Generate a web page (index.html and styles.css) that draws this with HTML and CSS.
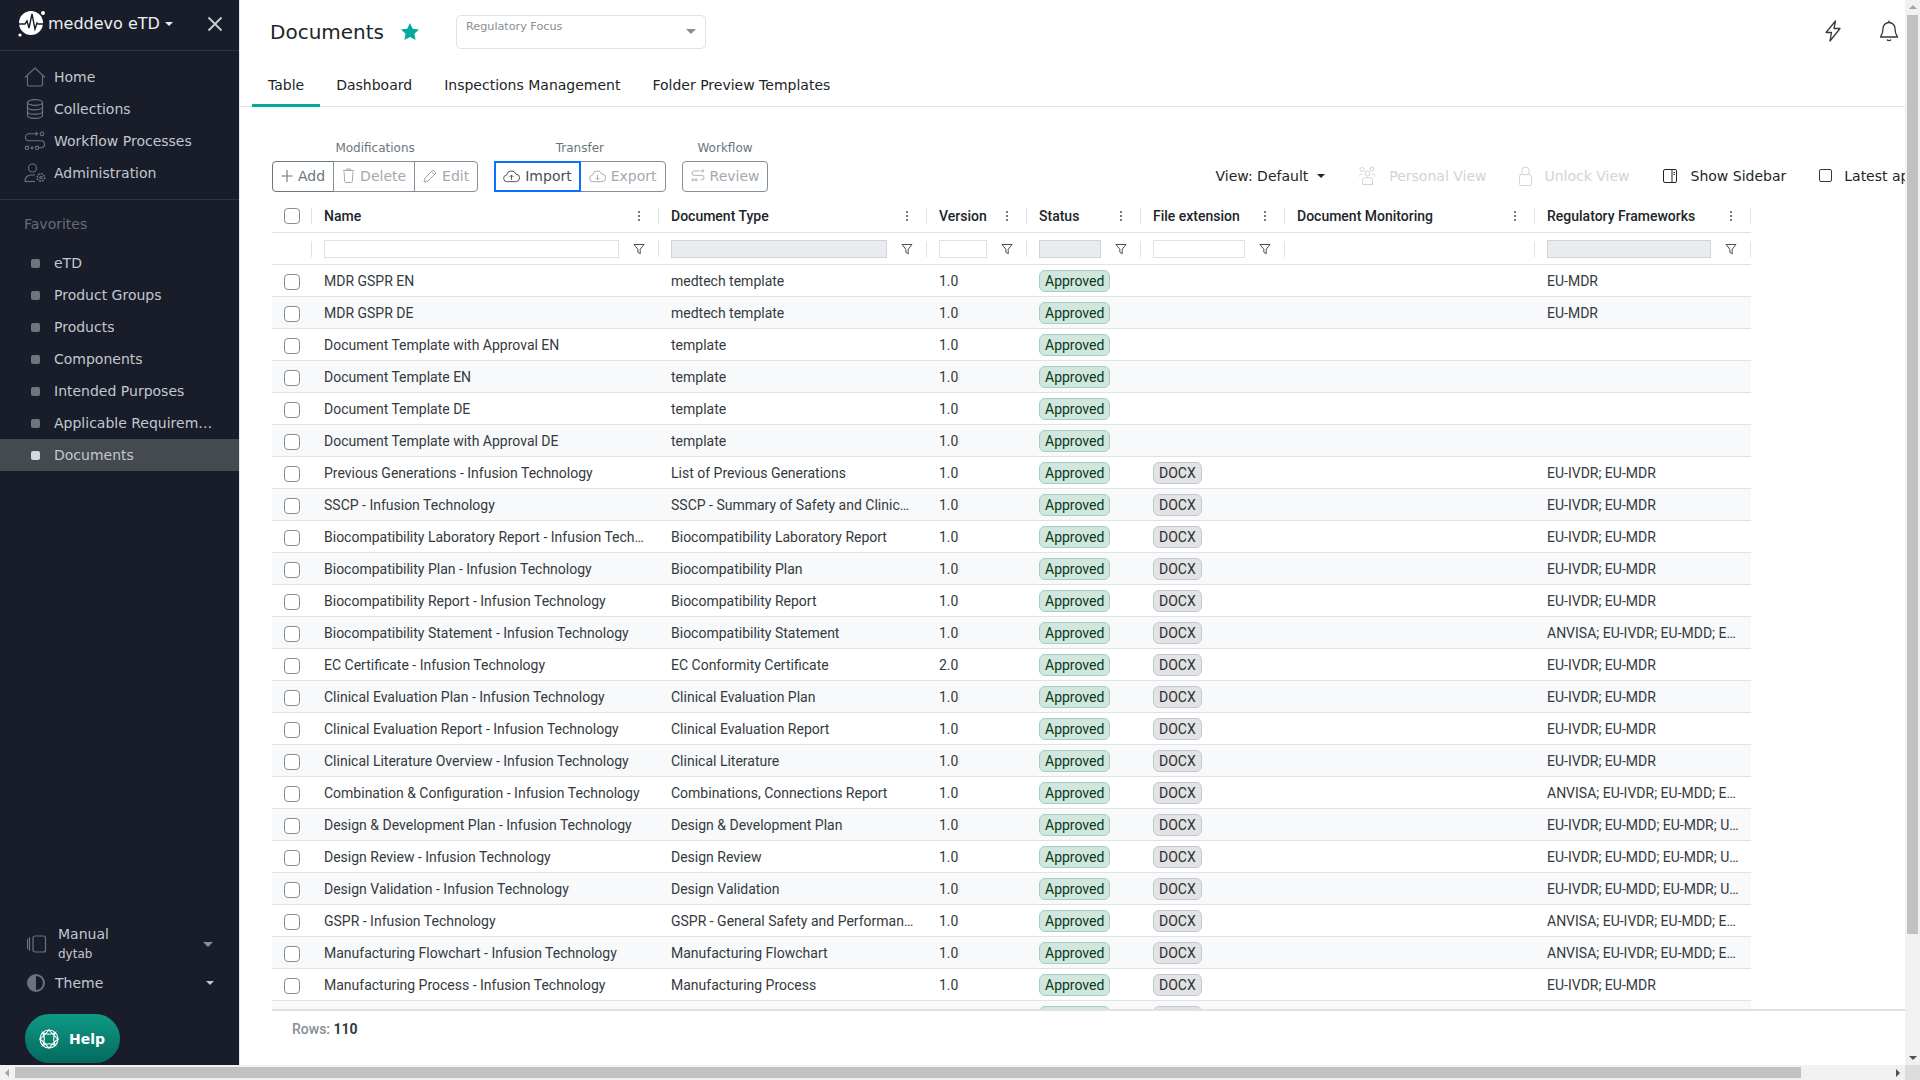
FILE: index.html
```html
<!DOCTYPE html>
<html lang="en">

<head>
    <meta charset="UTF-8">
    <title>Documents</title>
    <link rel="stylesheet" href="styles.css">
</head>

<body>
    <svg class="defs" width="0" height="0">
        <symbol id="kebab" viewBox="0 0 4 12">
            <circle cx="2" cy="2" r="1" />
            <circle cx="2" cy="6" r="1" />
            <circle cx="2" cy="10" r="1" />
        </symbol>
        <symbol id="funnel" viewBox="0 0 12 12">
            <path d="M1 1.5h10L7.2 6.2v4.6L4.8 9.2v-3z" fill="none" stroke="currentColor" stroke-width="1" stroke-linejoin="round" />
        </symbol>
    </svg>

    <div class="app">
        <aside class="sidebar">
            <div class="brand">
                <svg class="logo" width="32" height="32" viewBox="0 0 32 32">
                    <circle cx="15" cy="15" r="12" fill="#fff" />
                    <circle cx="27" cy="5" r="2" fill="#fff" />
                    <circle cx="4" cy="27" r="1.6" fill="#fff" />
                    <path d="M3 16h6l2-3 2 7 3-14 3 15 2-6 1 1h5" fill="none" stroke="#181d29" stroke-width="1.4" />
                </svg>
                <span class="brand-name">meddevo eTD</span>
                <span class="caret caret-white"></span>
                <svg class="close" width="16" height="16" viewBox="0 0 16 16">
                    <path d="M1.5 1.5l13 13M14.5 1.5l-13 13" stroke="#c9ced6" stroke-width="1.8" />
                </svg>
            </div>

            <nav class="nav">
                <a class="nav-item">
                    <svg width="22" height="20" viewBox="0 0 22 20" fill="none" stroke="#6b7280" stroke-width="1.1">
                        <path d="M1 10.5L11 1l10 9.5" />
                        <path d="M3.5 8.5v9a1.5 1.5 0 0 0 1.5 1.5h12a1.5 1.5 0 0 0 1.5-1.5v-9" />
                    </svg>
                    Home
                </a>
                <a class="nav-item">
                    <svg width="22" height="20" viewBox="0 0 22 20" fill="none" stroke="#6b7280" stroke-width="1.2">
                        <ellipse cx="11" cy="3.5" rx="7.5" ry="2.8" />
                        <path d="M3.5 3.5v13c0 1.6 3.4 2.8 7.5 2.8s7.5-1.2 7.5-2.8v-13" />
                        <path d="M3.5 8c0 1.6 3.4 2.8 7.5 2.8s7.5-1.2 7.5-2.8M3.5 12.4c0 1.6 3.4 2.8 7.5 2.8s7.5-1.2 7.5-2.8" />
                    </svg>
                    Collections
                </a>
                <a class="nav-item">
                    <svg width="22" height="20" viewBox="0 0 22 20" fill="none" stroke="#6b7280" stroke-width="1.1">
                        <circle cx="18" cy="2.8" r="1.8" />
                        <path d="M14 2.8H5a3 3 0 0 0 0 7h12a3 3 0 0 1 0 7h-2" />
                        <path d="M11.5 1l2 1.8-2 1.8" />
                        <circle cx="3" cy="16.8" r="1.7" />
                        <circle cx="8" cy="16.8" r="1" />
                        <circle cx="13" cy="16.8" r="1.7" />
                    </svg>
                    Workflow Processes
                </a>
                <a class="nav-item">
                    <svg width="22" height="20" viewBox="0 0 22 20" fill="none" stroke="#6b7280" stroke-width="1.1">
                        <circle cx="8.5" cy="5" r="4" />
                        <path d="M1 18.5c0-4 2.500-6.500 6-6.500h4" />
                        <path d="M1 18.500h10" />
                        <circle cx="17" cy="14.500" r="3.700" stroke-dasharray="2 .8" stroke-width="1.400" />
                        <circle cx="17" cy="14.500" r="1.200" />
                    </svg>
                    Administration
                </a>
            </nav>

            <div class="favorites">
                <div class="fav-title">Favorites</div>
                <a class="nav-item fav"><i class="bullet"></i><span class="fav-name">eTD</span></a>
                <a class="nav-item fav"><i class="bullet"></i><span class="fav-name">Product Groups</span></a>
                <a class="nav-item fav"><i class="bullet"></i><span class="fav-name">Products</span></a>
                <a class="nav-item fav"><i class="bullet"></i><span class="fav-name">Components</span></a>
                <a class="nav-item fav"><i class="bullet"></i><span class="fav-name">Intended Purposes</span></a>
                <a class="nav-item fav"><i class="bullet"></i><span class="fav-name">Applicable Requirements</span></a>
                <a class="nav-item fav active"><i class="bullet"></i><span class="fav-name">Documents</span></a>
            </div>

            <div class="side-bottom">
                <div class="manual">
                    <svg width="20" height="18" viewBox="0 0 20 18" fill="none" stroke="#6b7280" stroke-width="1.2">
                        <rect x="6" y="1" width="12.500" height="16" rx="2" />
                        <path d="M2.500 2v14M.6 4v10" />
                    </svg>
                    <div class="manual-text">
                        <div>Manual</div>
                        <div class="manual-sub">dytab</div>
                    </div>
                    <span class="caret caret-gray"></span>
                </div>
                <div class="theme">
                    <svg width="18" height="18" viewBox="0 0 18 18">
                        <circle cx="9" cy="9" r="8" fill="none" stroke="#6b7280" stroke-width="2" />
                        <path d="M9 1a8 8 0 0 0 0 16z" fill="#6b7280" />
                    </svg>
                    <span class="theme-label">Theme</span>
                    <span class="caret caret-light"></span>
                </div>
                <button class="help">
                    <svg width="20" height="20" viewBox="0 0 20 20" fill="none" stroke="#fff" stroke-width="1.100">
                        <circle cx="10" cy="10" r="9" />
                        <path d="M10 1Q14 6 19 10 14 14 10 19 6 14 1 10 6 6 10 1z" />
                        <path d="M3.600 3.600Q10 7 16.400 3.600 13 10 16.400 16.400 10 13 3.600 16.400 7 10 3.600 3.600z" />
                    </svg>
                    Help
                </button>
            </div>
        </aside>

        <main class="main">
            <header class="topbar">
                <h1>Documents</h1>
                <svg class="star" width="18" height="17" viewBox="0 0 18 17">
                    <path d="M9 0l2.700 5.700 6.300.8-4.600 4.300 1.200 6.200L9 14l-5.600 3 1.200-6.200L0 6.500l6.300-.8z" fill="#00ab9e" />
                </svg>
                <div class="focus">
                    <span>Regulatory Focus</span>
                    <span class="caret caret-gray"></span>
                </div>
                <div class="top-icons">
                    <svg width="18" height="22" viewBox="0 0 18 22" fill="none" stroke="#343a40" stroke-width="1.300" stroke-linejoin="round">
                        <path d="M11.500 1L2 12.500h5.500L6 21l10-12.500h-6z" />
                    </svg>
                    <svg width="20" height="22" viewBox="0 0 20 22" fill="none" stroke="#343a40" stroke-width="1.300" stroke-linejoin="round">
                        <path d="M10 2.500a6 6 0 0 0-6 6c0 5-1 6.500-2.500 8.500h17C17 15 16 13.500 16 8.500a6 6 0 0 0-6-6z" />
                        <path d="M10 .6v1.900M8 19.500a2.200 2 0 0 0 4 0" />
                    </svg>
                </div>
            </header>

            <div class="tabs">
                <a class="tab selected">Table</a>
                <a class="tab">Dashboard</a>
                <a class="tab">Inspections Management</a>
                <a class="tab">Folder Preview Templates</a>
            </div>

            <div class="toolbar">
                <div class="group">
                    <div class="group-label">Modifications</div>
                    <div class="btn-group">
                        <button class="btn strong">
                            <svg width="12" height="14" viewBox="0 0 12 14" stroke="currentColor" stroke-width="1.100"><path d="M6 1v12M.5 7h11" /></svg>
                            Add
                        </button>
                        <button class="btn">
                            <svg width="13" height="15" viewBox="0 0 12 15" fill="none" stroke="currentColor"><path d="M1.500 3.500l.7 10a1 1 0 0 0 1 1h5.600a1 1 0 0 0 1-1l.7-10M.5 2.500h11M4 2.500V1h4v1.500" /></svg>
                            Delete
                        </button>
                        <button class="btn">
                            <svg width="14" height="14" viewBox="0 0 14 14" fill="none" stroke="currentColor"><path d="M1 13l1-4L10 1l3 3-8 8zM8.500 2.500l3 3" /></svg>
                            Edit
                        </button>
                    </div>
                </div>
                <div class="group">
                    <div class="group-label">Transfer</div>
                    <div class="btn-group">
                        <button class="btn strong focused">
                            <svg width="17" height="14" viewBox="0 0 18 14" fill="none" stroke="currentColor"><path d="M4.500 13a3.500 3.500 0 0 1-.6-7 5 5 0 0 1 9.700-1 4 4 0 0 1 0 8zM9 11V6M7 8l2-2 2 2" /></svg>
                            Import
                        </button>
                        <button class="btn">
                            <svg width="17" height="14" viewBox="0 0 18 14" fill="none" stroke="currentColor"><path d="M4.500 13a3.500 3.500 0 0 1-.6-7 5 5 0 0 1 9.700-1 4 4 0 0 1 0 8zM9 6v5M7 9l2 2 2-2" /></svg>
                            Export
                        </button>
                    </div>
                </div>
                <div class="group">
                    <div class="group-label">Workflow</div>
                    <div class="btn-group">
                        <button class="btn">
                            <svg width="14" height="15" viewBox="0 0 22 20" fill="none" stroke="currentColor" stroke-width="1.400"><circle cx="18" cy="2.800" r="1.800" /><path d="M14 2.800H5a3 3 0 0 0 0 7h12a3 3 0 0 1 0 7h-2" /><circle cx="3" cy="16.800" r="1.700" /><circle cx="8" cy="16.800" r="1.700" /></svg>
                            Review
                        </button>
                    </div>
                </div>

                <div class="view-tools">
                    <div class="tool">View: Default <span class="caret caret-dark"></span></div>
                    <div class="tool muted">
                        <svg width="19" height="20" viewBox="0 0 18 20" fill="none" stroke="currentColor"><circle cx="9" cy="7.500" r="2.500" /><circle cx="3.500" cy="3.500" r="2" /><circle cx="13.500" cy="3" r="2" /><path d="M4 18.500v-4a3 3 0 0 1 3-3h4a3 3 0 0 1 3 3v4zM1 10.500c0-1.500 1-2.500 3-2.500M16.500 10.500c0-1.500-1-2.500-3-2.500" /></svg>
                        Personal View
                    </div>
                    <div class="tool muted">
                        <svg width="13" height="20" viewBox="0 0 13 20" fill="none" stroke="currentColor"><rect x=".5" y="8.500" width="12" height="11" rx="2" /><path d="M3 8.500V4.500a3.500 3.500 0 0 1 7 0v4" /></svg>
                        Unlock View
                    </div>
                    <div class="tool">
                        <svg class="side-icon" width="14" height="14" viewBox="0 0 14 14" fill="none" stroke="#212529"><rect x=".5" y=".5" width="13" height="13" rx="1.500" /><path d="M9 .5v13M10.500 3.500h1.500M10.500 5.500h1.500" /></svg>
                        Show Sidebar
                    </div>
                    <div class="tool">
                        <i class="check small"></i>
                        Latest approved
                    </div>
                </div>
            </div>

            <div class="grid">
                <div class="row head">
                    <div class="cell box"><div class="inner"><i class="check"></i></div></div>
                    <div class="cell"><div class="inner">Name<svg class="kebab"><use href="#kebab" /></svg></div></div>
                    <div class="cell"><div class="inner">Document Type<svg class="kebab"><use href="#kebab" /></svg></div></div>
                    <div class="cell"><div class="inner">Version<svg class="kebab"><use href="#kebab" /></svg></div></div>
                    <div class="cell"><div class="inner">Status<svg class="kebab"><use href="#kebab" /></svg></div></div>
                    <div class="cell"><div class="inner">File extension<svg class="kebab"><use href="#kebab" /></svg></div></div>
                    <div class="cell"><div class="inner">Document Monitoring<svg class="kebab"><use href="#kebab" /></svg></div></div>
                    <div class="cell"><div class="inner">Regulatory Frameworks<svg class="kebab"><use href="#kebab" /></svg></div></div>
                </div>
                <div class="row filters">
                    <div class="cell box"><div class="inner"></div></div>
                    <div class="cell"><div class="inner"><input class="filter"><svg class="funnel"><use href="#funnel" /></svg></div></div>
                    <div class="cell"><div class="inner"><input class="filter off"><svg class="funnel"><use href="#funnel" /></svg></div></div>
                    <div class="cell"><div class="inner"><input class="filter"><svg class="funnel"><use href="#funnel" /></svg></div></div>
                    <div class="cell"><div class="inner"><input class="filter off"><svg class="funnel"><use href="#funnel" /></svg></div></div>
                    <div class="cell"><div class="inner"><input class="filter"><svg class="funnel"><use href="#funnel" /></svg></div></div>
                    <div class="cell"><div class="inner"></div></div>
                    <div class="cell"><div class="inner"><input class="filter off"><svg class="funnel"><use href="#funnel" /></svg></div></div>
                </div>
                <div class="rows">
                    <div class="row"><div class="cell box"><i class="check"></i></div><div class="cell">MDR GSPR EN</div><div class="cell">medtech template</div><div class="cell">1.0</div><div class="cell"><span class="badge ok">Approved</span></div><div class="cell"></div><div class="cell"></div><div class="cell">EU-MDR</div></div>
                    <div class="row"><div class="cell box"><i class="check"></i></div><div class="cell">MDR GSPR DE</div><div class="cell">medtech template</div><div class="cell">1.0</div><div class="cell"><span class="badge ok">Approved</span></div><div class="cell"></div><div class="cell"></div><div class="cell">EU-MDR</div></div>
                    <div class="row"><div class="cell box"><i class="check"></i></div><div class="cell">Document Template with Approval EN</div><div class="cell">template</div><div class="cell">1.0</div><div class="cell"><span class="badge ok">Approved</span></div><div class="cell"></div><div class="cell"></div><div class="cell"></div></div>
                    <div class="row"><div class="cell box"><i class="check"></i></div><div class="cell">Document Template EN</div><div class="cell">template</div><div class="cell">1.0</div><div class="cell"><span class="badge ok">Approved</span></div><div class="cell"></div><div class="cell"></div><div class="cell"></div></div>
                    <div class="row"><div class="cell box"><i class="check"></i></div><div class="cell">Document Template DE</div><div class="cell">template</div><div class="cell">1.0</div><div class="cell"><span class="badge ok">Approved</span></div><div class="cell"></div><div class="cell"></div><div class="cell"></div></div>
                    <div class="row"><div class="cell box"><i class="check"></i></div><div class="cell">Document Template with Approval DE</div><div class="cell">template</div><div class="cell">1.0</div><div class="cell"><span class="badge ok">Approved</span></div><div class="cell"></div><div class="cell"></div><div class="cell"></div></div>
                    <div class="row"><div class="cell box"><i class="check"></i></div><div class="cell">Previous Generations - Infusion Technology</div><div class="cell">List of Previous Generations</div><div class="cell">1.0</div><div class="cell"><span class="badge ok">Approved</span></div><div class="cell"><span class="badge ext">DOCX</span></div><div class="cell"></div><div class="cell">EU-IVDR; EU-MDR</div></div>
                    <div class="row"><div class="cell box"><i class="check"></i></div><div class="cell">SSCP - Infusion Technology</div><div class="cell">SSCP - Summary of Safety and Clinical Performance</div><div class="cell">1.0</div><div class="cell"><span class="badge ok">Approved</span></div><div class="cell"><span class="badge ext">DOCX</span></div><div class="cell"></div><div class="cell">EU-IVDR; EU-MDR</div></div>
                    <div class="row"><div class="cell box"><i class="check"></i></div><div class="cell">Biocompatibility Laboratory Report - Infusion Technology</div><div class="cell">Biocompatibility Laboratory Report</div><div class="cell">1.0</div><div class="cell"><span class="badge ok">Approved</span></div><div class="cell"><span class="badge ext">DOCX</span></div><div class="cell"></div><div class="cell">EU-IVDR; EU-MDR</div></div>
                    <div class="row"><div class="cell box"><i class="check"></i></div><div class="cell">Biocompatibility Plan - Infusion Technology</div><div class="cell">Biocompatibility Plan</div><div class="cell">1.0</div><div class="cell"><span class="badge ok">Approved</span></div><div class="cell"><span class="badge ext">DOCX</span></div><div class="cell"></div><div class="cell">EU-IVDR; EU-MDR</div></div>
                    <div class="row"><div class="cell box"><i class="check"></i></div><div class="cell">Biocompatibility Report - Infusion Technology</div><div class="cell">Biocompatibility Report</div><div class="cell">1.0</div><div class="cell"><span class="badge ok">Approved</span></div><div class="cell"><span class="badge ext">DOCX</span></div><div class="cell"></div><div class="cell">EU-IVDR; EU-MDR</div></div>
                    <div class="row"><div class="cell box"><i class="check"></i></div><div class="cell">Biocompatibility Statement - Infusion Technology</div><div class="cell">Biocompatibility Statement</div><div class="cell">1.0</div><div class="cell"><span class="badge ok">Approved</span></div><div class="cell"><span class="badge ext">DOCX</span></div><div class="cell"></div><div class="cell">ANVISA; EU-IVDR; EU-MDD; EU-MDR</div></div>
                    <div class="row"><div class="cell box"><i class="check"></i></div><div class="cell">EC Certificate - Infusion Technology</div><div class="cell">EC Conformity Certificate</div><div class="cell">2.0</div><div class="cell"><span class="badge ok">Approved</span></div><div class="cell"><span class="badge ext">DOCX</span></div><div class="cell"></div><div class="cell">EU-IVDR; EU-MDR</div></div>
                    <div class="row"><div class="cell box"><i class="check"></i></div><div class="cell">Clinical Evaluation Plan - Infusion Technology</div><div class="cell">Clinical Evaluation Plan</div><div class="cell">1.0</div><div class="cell"><span class="badge ok">Approved</span></div><div class="cell"><span class="badge ext">DOCX</span></div><div class="cell"></div><div class="cell">EU-IVDR; EU-MDR</div></div>
                    <div class="row"><div class="cell box"><i class="check"></i></div><div class="cell">Clinical Evaluation Report - Infusion Technology</div><div class="cell">Clinical Evaluation Report</div><div class="cell">1.0</div><div class="cell"><span class="badge ok">Approved</span></div><div class="cell"><span class="badge ext">DOCX</span></div><div class="cell"></div><div class="cell">EU-IVDR; EU-MDR</div></div>
                    <div class="row"><div class="cell box"><i class="check"></i></div><div class="cell">Clinical Literature Overview - Infusion Technology</div><div class="cell">Clinical Literature</div><div class="cell">1.0</div><div class="cell"><span class="badge ok">Approved</span></div><div class="cell"><span class="badge ext">DOCX</span></div><div class="cell"></div><div class="cell">EU-IVDR; EU-MDR</div></div>
                    <div class="row"><div class="cell box"><i class="check"></i></div><div class="cell">Combination &amp; Configuration - Infusion Technology</div><div class="cell">Combinations, Connections Report</div><div class="cell">1.0</div><div class="cell"><span class="badge ok">Approved</span></div><div class="cell"><span class="badge ext">DOCX</span></div><div class="cell"></div><div class="cell">ANVISA; EU-IVDR; EU-MDD; EU-MDR</div></div>
                    <div class="row"><div class="cell box"><i class="check"></i></div><div class="cell">Design &amp; Development Plan - Infusion Technology</div><div class="cell">Design &amp; Development Plan</div><div class="cell">1.0</div><div class="cell"><span class="badge ok">Approved</span></div><div class="cell"><span class="badge ext">DOCX</span></div><div class="cell"></div><div class="cell">EU-IVDR; EU-MDD; EU-MDR; UKCA</div></div>
                    <div class="row"><div class="cell box"><i class="check"></i></div><div class="cell">Design Review - Infusion Technology</div><div class="cell">Design Review</div><div class="cell">1.0</div><div class="cell"><span class="badge ok">Approved</span></div><div class="cell"><span class="badge ext">DOCX</span></div><div class="cell"></div><div class="cell">EU-IVDR; EU-MDD; EU-MDR; UKCA</div></div>
                    <div class="row"><div class="cell box"><i class="check"></i></div><div class="cell">Design Validation - Infusion Technology</div><div class="cell">Design Validation</div><div class="cell">1.0</div><div class="cell"><span class="badge ok">Approved</span></div><div class="cell"><span class="badge ext">DOCX</span></div><div class="cell"></div><div class="cell">EU-IVDR; EU-MDD; EU-MDR; UKCA</div></div>
                    <div class="row"><div class="cell box"><i class="check"></i></div><div class="cell">GSPR - Infusion Technology</div><div class="cell">GSPR - General Safety and Performance Requirements</div><div class="cell">1.0</div><div class="cell"><span class="badge ok">Approved</span></div><div class="cell"><span class="badge ext">DOCX</span></div><div class="cell"></div><div class="cell">ANVISA; EU-IVDR; EU-MDD; EU-MDR</div></div>
                    <div class="row"><div class="cell box"><i class="check"></i></div><div class="cell">Manufacturing Flowchart - Infusion Technology</div><div class="cell">Manufacturing Flowchart</div><div class="cell">1.0</div><div class="cell"><span class="badge ok">Approved</span></div><div class="cell"><span class="badge ext">DOCX</span></div><div class="cell"></div><div class="cell">ANVISA; EU-IVDR; EU-MDD; EU-MDR</div></div>
                    <div class="row"><div class="cell box"><i class="check"></i></div><div class="cell">Manufacturing Process - Infusion Technology</div><div class="cell">Manufacturing Process</div><div class="cell">1.0</div><div class="cell"><span class="badge ok">Approved</span></div><div class="cell"><span class="badge ext">DOCX</span></div><div class="cell"></div><div class="cell">EU-IVDR; EU-MDR</div></div>
                    <div class="row"><div class="cell box"></div><div class="cell"></div><div class="cell"></div><div class="cell"></div><div class="cell"><span class="badge ok">Approved</span></div><div class="cell"><span class="badge ext">DOCX</span></div><div class="cell"></div><div class="cell"></div></div>
                </div>
                <div class="grid-foot"><span class="rows-label">Rows:</span> <b>110</b></div>
            </div>
        </main>
    </div>

    <div class="vscroll">
        <span class="arrow up"></span>
        <div class="vthumb"></div>
        <span class="arrow down"></span>
    </div>
    <div class="hscroll">
        <span class="arrow left"></span>
        <div class="hthumb"></div>
        <span class="arrow right"></span>
    </div>
    <div class="corner"></div>
</body>

</html>
```

FILE: styles.css
```css
* {
    box-sizing: border-box;
}

body {
    margin: 0;
    height: 100vh;
    overflow: hidden;
    display: grid;
    grid-template-columns: 1fr 15px;
    grid-template-rows: 1fr 15px;
    font-family: "DejaVu Sans", sans-serif;
    font-size: 14px;
    color: #212529;
    background-color: white;
}

.defs {
    position: absolute;
}

.app {
    display: flex;
    min-width: 0;
    min-height: 0;
    overflow: hidden;
}

/* sidebar */
.sidebar {
    width: 240px;
    flex-shrink: 0;
    display: flex;
    flex-direction: column;
    background-color: #181d29;
    border-right: 1px solid #e4e7ec;
    color: #c3c7ce;
}

.brand {
    height: 51px;
    display: flex;
    align-items: center;
    padding: 0 16px 3px 16px;
    border-bottom: 1px solid #2f3440;
    flex-shrink: 0;
}

.logo {
    flex-shrink: 0;
}

.brand-name {
    font-size: 16px;
    color: #eceef1;
    margin-right: 5px;
}

.close {
    margin-left: auto;
}

.caret {
    display: inline-block;
    width: 0;
    height: 0;
    border-style: solid;
    border-width: 4.5px 4.5px 0;
    border-color: currentColor transparent transparent;
}

.caret-white {
    color: #eceef1;
}

.caret-gray {
    color: #868e96;
}

.caret-light {
    color: #c3c7ce;
}

.caret-dark {
    color: #212529;
}

.nav {
    padding: 10px 0;
    border-bottom: 1px solid #2f3440;
}

.nav-item {
    height: 32px;
    display: flex;
    align-items: center;
    gap: 8px;
    padding-left: 24px;
    color: #c3c7ce;
}

.fav-title {
    height: 47px;
    line-height: 49px;
    padding-left: 24px;
    color: #676c75;
}

.fav {
    gap: 14px;
    padding-left: 31px;
    padding-right: 24px;
}

.fav-name {
    overflow: hidden;
    white-space: nowrap;
    text-overflow: ellipsis;
}

.bullet {
    width: 9px;
    height: 9px;
    flex-shrink: 0;
    border-radius: 2px;
    background-color: #6f747d;
}

.active {
    background-color: #454950;
}

.active .bullet {
    background-color: #d3d8de;
}

.side-bottom {
    margin-top: auto;
    padding-left: 25px;
    padding-bottom: 2px;
}

.manual {
    display: flex;
    align-items: center;
    padding-right: 26px;
    height: 38px;
    margin-left: 2px;
    margin-bottom: 6px;
}

.manual-text {
    margin-left: 11px;
    line-height: 20px;
}

.manual-sub {
    font-size: 12px;
}

.manual .caret {
    margin-left: auto;
    border-width: 5px 5px 0;
}

.theme {
    display: flex;
    align-items: center;
    height: 28px;
    padding-right: 25px;
    margin-left: 2px;
    margin-bottom: 17px;
}

.theme-label {
    margin-left: 10px;
}

.theme .caret {
    margin-left: auto;
}

.help {
    width: 95px;
    height: 49px;
    display: flex;
    align-items: center;
    gap: 10px;
    padding: 0 0 0 14px;
    border: 0;
    border-radius: 25px;
    background: linear-gradient(#0f9a85, #04695f);
    color: white;
    font-family: inherit;
    font-size: 14px;
    font-weight: bold;
}

/* main area */
.main {
    flex: 1;
    min-width: 0;
    overflow: hidden;
}

.topbar {
    height: 62px;
    display: flex;
    align-items: center;
    padding-left: 30px;
}

h1 {
    margin: 2px 18px 0 0;
    font-size: 20px;
    font-weight: normal;
}

.star {
    margin-right: 37px;
    margin-left: -1px;
}

.focus {
    width: 250px;
    height: 34px;
    margin-bottom: -1px;
    display: flex;
    justify-content: space-between;
    padding: 4px 9px 0;
    border: 1px solid #dee2e6;
    border-radius: 5px;
    font-size: 11.2px;
    color: #868e96;
}

.focus .caret {
    margin-top: 9px;
    border-width: 5px 5px 0;
}

.top-icons {
    margin-left: auto;
    display: flex;
    align-items: center;
    gap: 37px;
    padding-right: 6px;
}

.tabs {
    height: 45px;
    display: flex;
    padding-left: 12px;
    border-bottom: 1px solid #dee2e6;
}

.tab {
    padding: 0 16px;
    height: 45px;
    line-height: 46px;
}

.selected {
    border-bottom: 3px solid #00ab9e;
}

.toolbar {
    display: flex;
    gap: 16px;
    padding: 32px 0 0 32px;
    width: 2000px;
    height: 93px;
}

.group-label {
    height: 18px;
    margin-bottom: 4px;
    line-height: 18px;
    text-align: center;
    font-size: 12px;
    color: #6c757d;
}

.btn-group {
    display: flex;
}

.btn {
    height: 31px;
    display: flex;
    align-items: center;
    gap: 5px;
    padding: 0 8px 2px;
    margin-left: -1px;
    border: 1px solid #868e96;
    background-color: white;
    color: #a3a9af;
    font-family: inherit;
    font-size: 14px;
}

.btn:first-child {
    margin-left: 0;
    border-radius: 4px 0 0 4px;
}

.btn:last-child {
    border-radius: 0 4px 4px 0;
}

.btn:only-child {
    border-radius: 4px;
}

.strong {
    color: #6c757d;
    border-color: #6c757d;
}

.focused {
    position: relative;
    padding: 0 7px 2px;
    color: #495057;
    border: 2px solid #0d6efd;
}

.btn.focused:first-child {
    border-radius: 0;
}

.view-tools {
    display: flex;
    align-items: center;
    gap: 33px;
    height: 31px;
    margin-top: 21px;
    margin-left: 431px;
    white-space: nowrap;
}

.tool {
    display: flex;
    align-items: center;
    gap: 12px;
}

.tool .caret-dark {
    margin-left: -3px;
}

.side-icon {
    margin-right: 2px;
}

.muted {
    color: #ced4da;
}

.check {
    display: block;
    width: 16px;
    height: 16px;
    border: 1px solid #868e96;
    border-radius: 4px;
    background-color: white;
}

.rows .check {
    margin-top: 2px;
}

.small {
    width: 13px;
    height: 13px;
    border-color: #343a40;
    border-radius: 2px;
}

/* table */
.grid {
    margin-left: 32px;
    font-family: Roboto, sans-serif;
}

.row {
    display: grid;
    grid-template-columns: 40px 347px 268px 100px 114px 144px 250px 216px;
    width: 1479px;
    height: 32px;
    border-bottom: 1px solid #dee2e6;
    align-items: center;
}

.head {
    height: 33px;
    padding-bottom: 1px;
}

.cell {
    min-width: 0;
    padding: 0 12px;
    white-space: nowrap;
    overflow: hidden;
    text-overflow: ellipsis;
    color: #343a40;
}

.inner {
    height: 16px;
    display: flex;
    align-items: center;
    justify-content: space-between;
    border-right: 1px solid #dee2e6;
}

.head .cell,
.filters .cell {
    padding: 0 0 0 12px;
    overflow: visible;
}

.head .box {
    padding: 0;
}

.head .box .inner {
    padding-left: 12px;
}

.head .cell {
    font-weight: 500;
    color: #212529;
}

.filters .box {
    padding: 0;
}

.kebab {
    width: 4px;
    height: 12px;
    margin-right: 17px;
    fill: #495057;
}

.funnel {
    width: 12px;
    height: 12px;
    margin: 0 13px 0 14px;
    color: #495057;
    flex-shrink: 0;
}

.filter {
    flex: 1;
    min-width: 0;
    height: 18px;
    padding: 0;
    border: 1px solid #dee2e6;
    background-color: white;
}

.off {
    background-color: #e9ecef;
    border-color: #ced4da;
}

.rows {
    height: 744px;
    overflow: hidden;
}

.rows .row:nth-child(even) {
    background-color: #f8f9fa;
}

.badge {
    display: inline-block;
    height: 22px;
    line-height: 20px;
    padding: 0 5px;
    border: 1px solid;
    border-radius: 6px;
    vertical-align: middle;
}

.ok {
    background-color: #d1e7dd;
    border-color: #a3cfbb;
    color: #0a3622;
}

.ext {
    background-color: #e2e3e5;
    border-color: #c4c8cb;
    color: #2b2f32;
}

.grid-foot {
    height: 40px;
    line-height: 36px;
    padding-left: 20px;
    border-top: 2px solid #dee2e6;
    font-size: 14px;
    color: #343a40;
}

.rows-label {
    color: #868e96;
    font-weight: 500;
}

/* scrollbars */
.vscroll {
    display: flex;
    flex-direction: column;
    align-items: center;
    background-color: #f1f1f1;
}

.vthumb {
    width: 11px;
    height: 919px;
    margin-top: 6px;
    background-color: #c1c1c1;
}

.hscroll {
    display: flex;
    align-items: center;
    background-color: #f1f1f1;
}

.hthumb {
    width: 1786px;
    height: 11px;
    margin-left: 6px;
    background-color: #c1c1c1;
}

.corner {
    background-color: #dcdcdc;
}

.arrow {
    width: 0;
    height: 0;
    border-style: solid;
    border-color: transparent;
}

.up {
    margin-top: 5px;
    border-width: 0 4px 4px;
    border-bottom-color: #a3a3a3;
}

.down {
    margin-top: auto;
    margin-bottom: 5px;
    border-width: 4px 4px 0;
    border-top-color: #505050;
}

.left {
    margin-left: 5px;
    border-width: 4px 4px 4px 0;
    border-right-color: #a3a3a3;
}

.right {
    margin-left: auto;
    margin-right: 5px;
    border-width: 4px 0 4px 4px;
    border-left-color: #505050;
}
```
